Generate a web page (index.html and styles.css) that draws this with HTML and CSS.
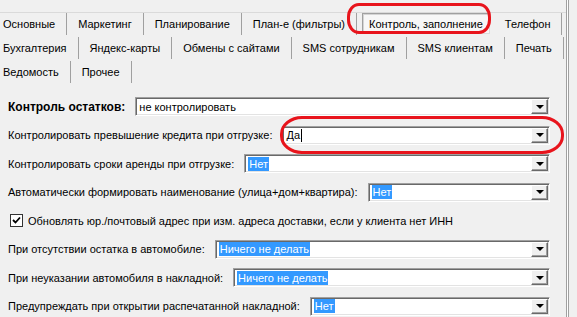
FILE: index.html
```html
<!DOCTYPE html>
<html lang="ru">
<head>
    <meta charset="UTF-8">
    <title>Настройки</title>
    <link rel="stylesheet" href="styles.css">
</head>
<body>
<div id="window">
    <div id="tabs">
        <div class="tab-row">
            <span class="tab">Основные</span>
            <span class="tab">Маркетинг</span>
            <span class="tab">Планирование</span>
            <span class="tab">План-е (фильтры)</span>
            <span class="tab active">Контроль, заполнение</span>
            <span class="tab">Телефон</span>
        </div>
        <div class="tab-row">
            <span class="tab">Бухгалтерия</span>
            <span class="tab">Яндекс-карты</span>
            <span class="tab">Обмены с сайтами</span>
            <span class="tab">SMS сотрудникам</span>
            <span class="tab">SMS клиентам</span>
            <span class="tab">Печать</span>
        </div>
        <div class="tab-row">
            <span class="tab">Ведомость</span>
            <span class="tab">Прочее</span>
        </div>
    </div>
    <div id="form">
        <div class="row">
            <span class="label bold">Контроль остатков:</span>
            <div class="combo"><span class="value">не контролировать</span><span class="btn"></span></div>
        </div>
        <div class="row">
            <span class="label">Контролировать превышение кредита при отгрузке:</span>
            <div class="combo"><span class="value">Да<i class="caret"></i></span><span class="btn"></span></div>
        </div>
        <div class="row">
            <span class="label">Контролировать сроки аренды при отгрузке:</span>
            <div class="combo"><span class="value"><b class="sel">Нет</b></span><span class="btn"></span></div>
        </div>
        <div class="row">
            <span class="label">Автоматически формировать наименование (улица+дом+квартира):</span>
            <div class="combo"><span class="value"><b class="sel">Нет</b></span><span class="btn"></span></div>
        </div>
        <div class="row check-row">
            <span class="checkbox">
                <svg width="9" height="9" viewBox="0 0 9 9"><path d="M1 4 L3.5 6.5 L8 1.5" fill="none" stroke="#000" stroke-width="1.8"/></svg>
            </span>
            <span>Обновлять юр./почтовый адрес при изм. адреса доставки, если у клиента нет ИНН</span>
        </div>
        <div class="row">
            <span class="label">При отсутствии остатка в автомобиле:</span>
            <div class="combo"><span class="value"><b class="sel">Ничего не делать</b></span><span class="btn"></span></div>
        </div>
        <div class="row">
            <span class="label">При неуказании автомобиля в накладной:</span>
            <div class="combo"><span class="value"><b class="sel">Ничего не делать</b></span><span class="btn"></span></div>
        </div>
        <div class="row">
            <span class="label">Предупреждать при открытии распечатанной накладной:</span>
            <div class="combo"><span class="value"><b class="sel">Нет</b></span><span class="btn"></span></div>
        </div>
    </div>
    <div class="mark mark-tab"></div>
    <div class="mark mark-field"></div>
</div>
</body>
</html>
```
FILE: styles.css
```css
*{
    padding: 0;
    margin: 0;
    box-sizing: border-box;
}
body{
    background: #f0f0f0;
    font-family: "Liberation Sans", Arial, sans-serif;
    font-size: 11px;
    color: #000000;
}
#window{
    position: relative;
    width: 567px;
    height: 317px;
    padding-top: 12px;
    border-right: 1px solid #a0a0a0;
    box-shadow: 1px 0 0 #ffffff, 2px 0 0 #a0a0a0;
}
#tabs{
    border-top: 1px solid #dadada;
    display: flex;
    flex-direction: column;
    gap: 2px;
}
.tab-row{
    display: flex;
    height: 22px;
}
.tab{
    display: flex;
    align-items: center;
    padding: 0 11px;
    border-right: 1px solid #a0a0a0;
    white-space: nowrap;
}
.tab:first-child{
    padding-left: 3px;
}
.tab.active{
    margin: 0 4px 1px 5px;
    padding: 1px 6px 0;
    border: 1px solid #a0a0a0;
    border-right-color: #dcdcdc;
    border-bottom-color: #dcdcdc;
    background: #f7f7f7;
    box-shadow: inset 1px 1px 0 #d4d4d4;
}
#form{
    padding: 14px 16px 0 8px;
    display: flex;
    flex-direction: column;
    gap: 9.5px;
}
.row{
    display: flex;
    align-items: center;
    height: 19px;
}
.label{
    margin-right: 10px;
    white-space: nowrap;
}
.bold{
    font-weight: bold;
    font-size: 12px;
}
.combo{
    flex: 1;
    height: 19px;
    display: flex;
    background: #ffffff;
    border: 1px solid;
    border-color: #a0a0a0 #ffffff #ffffff #a0a0a0;
    box-shadow: inset 1px 1px 0 #696969, inset -1px -1px 0 #e3e3e3;
    padding: 1px;
}
.value{
    flex: 1;
    display: flex;
    align-items: center;
    padding-left: 2px;
    white-space: nowrap;
}
.sel{
    font-weight: normal;
    background: #3399ff;
    color: #ffffff;
    line-height: 14px;
    padding: 0 1px;
}
.caret{
    display: inline-block;
    width: 1px;
    height: 13px;
    background: #000000;
    margin-left: 1px;
}
.btn{
    width: 17px;
    background: #f0f0f0;
    border: 1px solid;
    border-color: #ffffff #696969 #696969 #ffffff;
    box-shadow: inset -1px -1px 0 #a0a0a0;
    display: flex;
    align-items: center;
    justify-content: center;
}
.btn::after{
    content: "";
    border-left: 4px solid transparent;
    border-right: 4px solid transparent;
    border-top: 4px solid #000000;
}
.check-row{
    padding-left: 2px;
}
.checkbox{
    width: 13px;
    height: 13px;
    border: 1px solid #333333;
    background: #ffffff;
    margin-right: 5px;
    display: flex;
    align-items: center;
    justify-content: center;
}
.mark{
    position: absolute;
    border: 3px solid #e8141c;
}
.mark-tab{
    left: 347px;
    top: 3px;
    width: 144px;
    height: 31px;
    border-radius: 12px / 14px;
}
.mark-field{
    left: 280px;
    top: 116px;
    width: 284px;
    height: 38px;
    border-radius: 22px / 18px;
}
```
